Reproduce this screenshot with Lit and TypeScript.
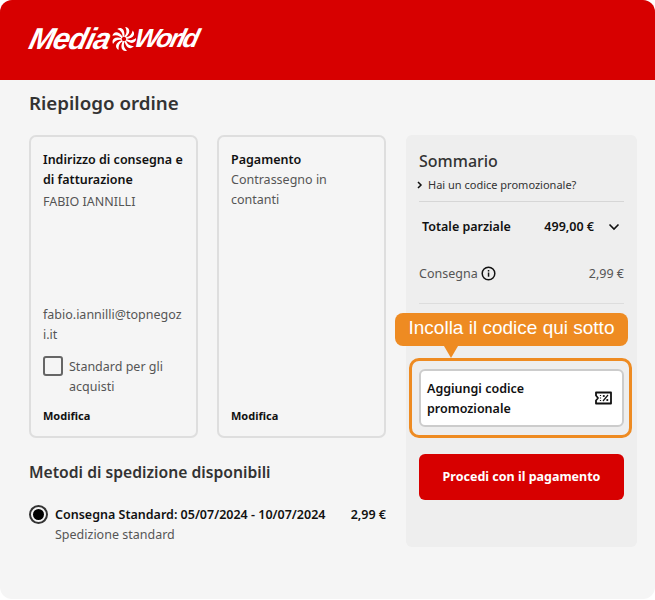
import { LitElement, html, css, svg } from "lit";
import { customElement } from "lit/decorators.js";

const blades = Array.from({ length: 9 }, (_, i) => i * 40);

@customElement("app-root")
export class AppRoot extends LitElement {
  static styles = css`
    :host { display: block; background: #fff; font-family: "Noto Sans", sans-serif; color: #333; font-size: 12.5px; line-height: 20px; }
    * { box-sizing: border-box; }
    .page { height: 599px; background: #f5f5f5; border-radius: 12px; overflow: hidden; display: flex; flex-direction: column; }
    .header { height: 80px; background: #d70000; padding: 26px 0 0 29px; flex: none; }
    .logo { display: flex; align-items: center; height: 25px; color: #fff; font: italic 700 30px/25px "Liberation Sans", sans-serif; }
    .logo span { display: block; transform: skewX(-14deg); }
    .logo .media { letter-spacing: -1px; margin-left: 1px; }
    .logo .world { font-size: 26px; letter-spacing: -2.2px; }
    .logo svg { width: 24px; height: 24px; margin: 0 -1px 0 2px; flex: none; }
    .content { padding: 9px 18px 0 29px; }
    h1 { margin: 0 0 18px; font-size: 18.75px; line-height: 28px; font-weight: 600; color: #333; }
    .cols { display: flex; gap: 20px; align-items: flex-start; }
    .left { width: 357px; flex: none; }
    .cards { display: flex; gap: 19px; }
    .card { width: 169px; height: 303px; border: 2px solid #dedede; border-radius: 7px; padding: 13px 12px 10px; display: flex; flex-direction: column; }
    .card b, .bold { font-weight: 600; color: #111; }
    .name { margin-top: 2px; }
    .email { margin-top: 93px; word-break: break-all; }
    .check { margin-top: 11px; display: flex; gap: 6px; color: #555; }
    .check span:last-child { padding-top: 1px; }
    .box { width: 20px; height: 20px; border: 2px solid #666; border-radius: 3px; flex: none; }
    .modifica { margin-top: auto; font-size: 11px; font-weight: 700; color: #111; }
    h2 { margin: 22px 0 0; font-size: 15.7px; line-height: 24px; font-weight: 600; color: #333; }
    .ship { margin-top: 21px; display: flex; gap: 7px; }
    .radio { width: 19px; height: 19px; border: 2px solid #333; border-radius: 50%; flex: none; display: flex; align-items: center; justify-content: center; }
    .radio i { width: 11px; height: 11px; border-radius: 50%; background: #000; display: block; }
    .ship-body { flex: 1; min-width: 0; }
    .ship-top { display: flex; justify-content: space-between; font-weight: 600; color: #111; }
    .muted { color: #555; }
    .side { position: relative; width: 231px; height: 412px; flex: none; background: #eeeeee; border-radius: 6px; padding: 14px 13px 0; }
    .side h3 { margin: 0; font-size: 16px; line-height: 24px; font-weight: 500; color: #333; }
    .promo-link { display: flex; align-items: center; font-size: 11px; line-height: 20px; margin-top: 2px; color: #333; padding-bottom: 6px; border-bottom: 1px solid #d6d6d6; }
    .promo-link svg { margin: 0 5px 0 -3px; flex: none; }
    .tot { display: flex; align-items: center; padding: 0 4px 0 3px; margin-top: 15px; height: 20px; }
    .tot .bold:first-child { flex: 1; }
    .tot svg { margin-left: 14px; margin-top: -1px; }
    .row { display: flex; align-items: center; margin-top: 27px; padding-bottom: 19px; border-bottom: 1px solid #dddddd; color: #555; }
    .row svg { margin-left: 3px; margin-top: -1px; }
    .row .price { margin-left: auto; }
    .promo { margin-top: 65px; height: 58px; background: #fff; border: 2px solid #cccccc; border-radius: 6px; padding: 9px 10px 7px 6px; display: flex; align-items: center; justify-content: space-between; font-weight: 600; color: #111; }
    .promo svg { flex: none; margin-top: -2px; }
    .pay { display: block; width: 100%; margin-top: 27px; height: 46px; border: 0; border-radius: 6px; background: #d70000; color: #fff; font: 700 12.5px/20px "Noto Sans", sans-serif; }
    .highlight { position: absolute; left: 3px; top: 223px; width: 223px; height: 80px; border: 3px solid #ee8b22; border-radius: 10px; pointer-events: none; }
    .tip { position: absolute; left: -11px; top: 178px; width: 233px; height: 33px; background: #ee8b22; border-radius: 8px; color: #fff; font: 400 19px/30px "Liberation Sans", sans-serif; text-align: center; white-space: nowrap; }
    .tip::after { content: ""; position: absolute; left: 49px; top: 33px; border-left: 7px solid transparent; border-right: 7px solid transparent; border-top: 12px solid #ee8b22; }
  `;

  render() {
    return html`
      <div class="page">
        <div class="header">
          <div class="logo">
            <span class="media">Media</span>
            <svg viewBox="-12 -12 24 24" aria-hidden="true">
              ${blades.map(
                (a) => svg`<path transform="rotate(${a})" d="M0 -2.400 C2.600 -4.600 3.400 -8 1.200 -12 C5.400 -11.600 7.600 -7.200 1.800 -1.600 Z" fill="#fff"/>`
              )}
            </svg>
            <span class="world">World</span>
          </div>
        </div>
        <div class="content">
          <h1>Riepilogo ordine</h1>
          <div class="cols">
            <div class="left">
              <div class="cards">
                <div class="card">
                  <b>Indirizzo di consegna e di fatturazione</b>
                  <div class="name muted">FABIO IANNILLI</div>
                  <div class="email muted">fabio.iannilli@topnegozi.it</div>
                  <div class="check"><span class="box"></span><span>Standard per gli acquisti</span></div>
                  <div class="modifica">Modifica</div>
                </div>
                <div class="card">
                  <b>Pagamento</b>
                  <div class="muted">Contrassegno in contanti</div>
                  <div class="modifica">Modifica</div>
                </div>
              </div>
              <h2>Metodi di spedizione disponibili</h2>
              <div class="ship">
                <span class="radio"><i></i></span>
                <div class="ship-body">
                  <div class="ship-top"><span>Consegna Standard: 05/07/2024 - 10/07/2024</span><span>2,99 €</span></div>
                  <div class="muted">Spedizione standard</div>
                </div>
              </div>
            </div>
            <div class="side">
              <h3>Sommario</h3>
              <div class="promo-link">
                <svg width="7" height="8" viewBox="0 0 7 8"><path d="M2 1l3 3-3 3" fill="none" stroke="#111" stroke-width="1.5"/></svg>
                <span>Hai un codice promozionale?</span>
              </div>
              <div class="tot">
                <span class="bold">Totale parziale</span>
                <span class="bold">499,00 €</span>
                <svg width="12" height="8" viewBox="0 0 12 8"><path d="M1.5 1.5L6 6l4.500-4.500" fill="none" stroke="#111" stroke-width="1.600"/></svg>
              </div>
              <div class="row">
                <span>Consegna</span>
                <svg width="15" height="15" viewBox="0 0 15 15"><circle cx="7.500" cy="7.500" r="6.300" fill="none" stroke="#111" stroke-width="1.500"/><rect x="6.800" y="6.500" width="1.500" height="4.200" fill="#111"/><rect x="6.800" y="4" width="1.500" height="1.500" fill="#111"/></svg>
                <span class="price">2,99 €</span>
              </div>
              <div class="promo">
                <span>Aggiungi codice promozionale</span>
                <svg width="17" height="14" viewBox="0 0 17 14">
                  <path d="M1 1.500H16V12.500H1V9.500L3 7L1 4.500Z" fill="none" stroke="#111" stroke-width="1.800" stroke-linejoin="round"/>
                  <path d="M5.500 4v1M5.500 6.500v1M5.500 9v1" stroke="#111" stroke-width="1.200"/>
                  <path d="M8 10l5-6" stroke="#111" stroke-width="1.200"/>
                  <circle cx="8.800" cy="5" r="1.100" fill="#111"/><circle cx="12.300" cy="9" r="1.100" fill="#111"/>
                </svg>
              </div>
              <button class="pay">Procedi con il pagamento</button>
              <div class="highlight"></div>
              <div class="tip">Incolla il codice qui sotto</div>
            </div>
          </div>
        </div>
      </div>
    `;
  }
}
